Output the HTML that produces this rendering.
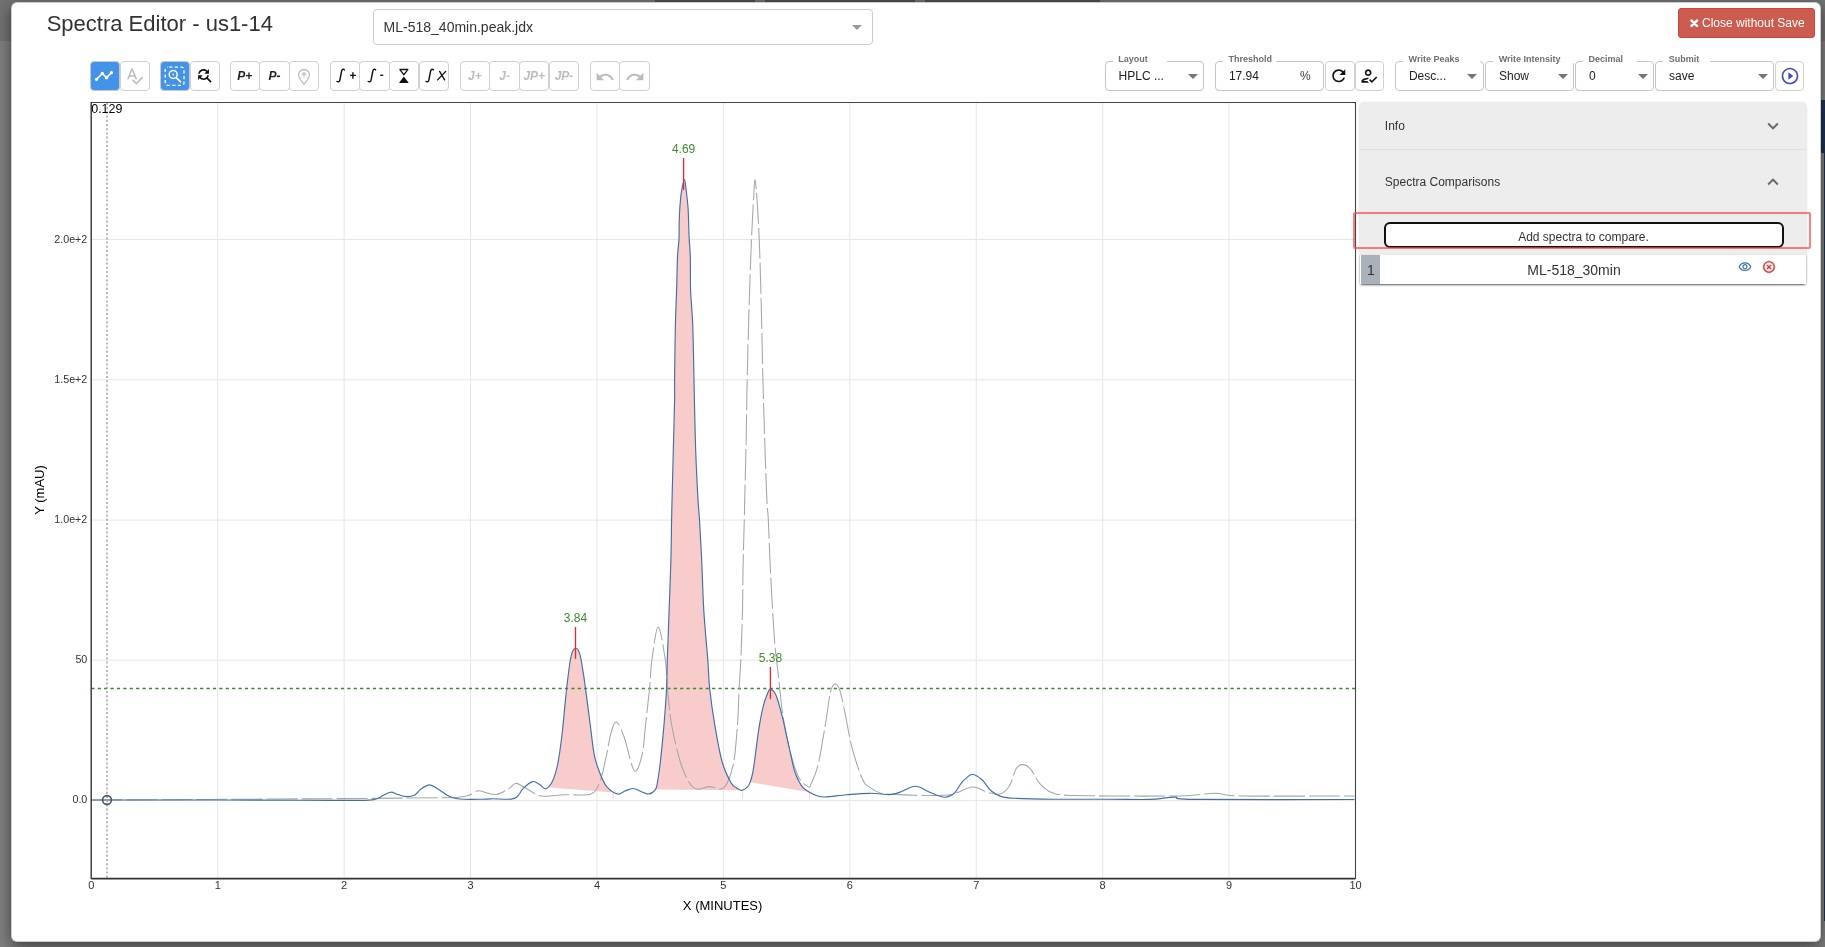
<!DOCTYPE html>
<html><head><meta charset="utf-8"><title>Spectra Editor</title>
<style>
*{box-sizing:border-box;margin:0;padding:0}
html,body{width:1825px;height:947px;overflow:hidden;background:#fff;font-family:"Liberation Sans",sans-serif;color:#333}
.abs{position:absolute}
#backdrop{position:absolute;left:0;top:0;width:1825px;height:947px;background:rgba(0,0,0,.5)}
#modal{position:absolute;left:11px;top:2px;width:1810px;height:939.5px;background:#fff;border:1px solid rgba(0,0,0,.2);border-radius:6px;box-shadow:0 5px 15px rgba(0,0,0,.5);overflow:hidden}
.title{position:absolute;left:46.7px;top:11px;font-size:22px;color:#333;line-height:25px;white-space:nowrap}
.fsel{position:absolute;left:372.6px;top:9px;width:500px;height:36px;border:1px solid #ccc;border-radius:4px;background:#fff}
.fsel span{position:absolute;left:10px;top:9px;font-size:14px;color:#333;line-height:16px;white-space:nowrap}
.caret{position:absolute;width:0;height:0;border-style:solid;border-width:5px 5px 0 5px;border-color:#999 transparent transparent transparent}
.btn-close{position:absolute;left:1678px;top:8px;width:137px;height:30px;background:#cc5b50;border:1px solid #c5473d;border-radius:3px;color:#fff;font-size:12px}
.btn-close span{position:absolute;left:23px;top:7px;line-height:14px;white-space:nowrap}
.tb{position:absolute;top:61px;width:30.4px;height:29.7px;border:1px solid #d0d0d0;border-radius:4px;background:#fff}
.tb.on{background:#4393e8;border-color:#c9c9c9}
.tb .t{position:absolute;left:0;right:0;top:7px;text-align:center;font-size:12px;font-weight:bold;font-style:italic;line-height:14px;color:#222;white-space:nowrap}
.tb.dis .t{color:#bdbdbd}
.tb svg{position:absolute}
.fld{position:absolute;top:61.2px;height:29.4px;border:1px solid #c4c4c4;border-radius:4px;background:#fff}
.fld .gap{position:absolute;top:-2px;height:3px;background:#fff;left:7px}
.fld .lbl{position:absolute;top:-8px;left:12.7px;font-size:9px;font-weight:bold;color:#6f6f6f;line-height:10px;white-space:nowrap}
.fld .val{position:absolute;left:13px;top:6.5px;font-size:12px;color:#222;line-height:14px;white-space:nowrap}
.dd{position:absolute;top:11.8px;width:0;height:0;border-style:solid;border-width:5px 5px 0 5px;border-color:#767676 transparent transparent transparent}
.panel{position:absolute;left:1360px;top:102px;width:445.5px;background:#ededed;box-shadow:0 1px 3px rgba(0,0,0,.2),0 1px 1px rgba(0,0,0,.14),0 2px 1px -1px rgba(0,0,0,.12);border-radius:4px}
.ph{position:absolute;left:24.8px;font-size:12px;color:#333;line-height:14px;white-space:nowrap}
</style></head>
<body>
<div id="root" style="position:absolute;left:0;top:0;width:1825px;height:947px;will-change:transform">
<!-- page behind backdrop -->
<div class="abs" style="left:0;top:0;width:1825px;height:40.5px;background:#e4e4e4"></div>
<div class="abs" style="left:655px;top:0;width:100px;height:4px;background:#9c9c9c"></div>
<div class="abs" style="left:765px;top:0;width:150px;height:4px;background:#9c9c9c"></div>
<div class="abs" style="left:925px;top:0;width:175px;height:4px;background:#9c9c9c"></div>
<div class="abs" style="left:1819px;top:100px;width:6px;height:53px;background:#3d66a4"></div>
<div class="abs" style="left:1823.5px;top:153px;width:1.5px;height:768px;background:#3d66a4"></div>
<div id="backdrop"></div>

<div id="modal">
</div>
<!-- content positioned in page coordinates -->
<div class="title">Spectra Editor - us1-14</div>
<div class="fsel"><span>ML-518_40min.peak.jdx</span><div class="caret" style="left:478px;top:14.6px"></div></div>
<div class="btn-close">
  <svg class="abs" style="left:11px;top:9.6px" width="8.5" height="8.5" viewBox="0 0 10 10"><path d="M1.8,1.8L8.2,8.2M8.2,1.8L1.8,8.2" stroke="#fff" stroke-width="3" stroke-linecap="round"/></svg>
  <span>Close without Save</span>
</div>

<!-- toolbar left -->
<div class="tb on" style="left:90px"><svg style="left:3px;top:3.5px" width="20" height="20" viewBox="0 0 24 24"><path fill="#fff" d="M23 8c0 1.1-.9 2-2 2-.18 0-.35-.02-.51-.07l-3.56 3.55c.05.16.07.34.07.52 0 1.1-.9 2-2 2s-2-.9-2-2c0-.18.02-.36.07-.52l-2.55-2.55c-.16.05-.34.07-.52.07s-.36-.02-.52-.07l-4.55 4.56c.05.16.07.33.07.51 0 1.1-.9 2-2 2s-2-.9-2-2 .9-2 2-2c.18 0 .35.02.51.07l4.56-4.55C8.02 9.36 8 9.18 8 9c0-1.1.9-2 2-2s2 .9 2 2c0 .18-.02.36-.07.52l2.55 2.55c.16-.05.34-.07.52-.07s.36.02.52.07l3.55-3.56C19.02 8.35 19 8.18 19 8c0-1.1.9-2 2-2s2 .9 2 2z"/></svg></div>
<div class="tb dis" style="left:119.7px"><svg style="left:4px;top:4px" width="20" height="20" viewBox="0 0 24 24"><path fill="#bdbdbd" d="M12.45 16h2.09L9.43 3H7.57L2.46 16h2.09l1.12-3h5.64l1.14 3zm-6.02-5L8.5 5.48 10.57 11H6.43zm15.16.59l-8.09 8.09L9.83 16l-1.41 1.41 5.09 5.09L22 14l-1.41-1.41z"/></svg></div>

<div class="tb on" style="left:160px"><svg style="left:2.5px;top:3.5px" width="22" height="22" viewBox="0 0 22 22">
  <rect x="1.2" y="1.2" width="18.8" height="18.2" rx="2.5" fill="none" stroke="#fff" stroke-width="1.25" stroke-dasharray="3.2,2.4" stroke-dashoffset="-1.5"/>
  <circle cx="9.2" cy="8.5" r="4" fill="none" stroke="#fff" stroke-width="1.5"/>
  <path d="M12.2,11.7L16.6,15.9" stroke="#fff" stroke-width="1.6" stroke-linecap="round"/>
  <path d="M9.1,6.4L9.8,8.5L9.1,10.6L8.4,8.5Z" fill="#fff" opacity=".85"/>
</svg></div>
<div class="tb" style="left:189.7px"><svg style="left:4px;top:4px" width="18.6" height="18.6" viewBox="0 0 24 24"><path fill="#111" d="M11 6c1.38 0 2.63.56 3.54 1.46L12 10h6V4l-2.05 2.05C14.68 4.78 12.93 4 11 4c-3.53 0-6.43 2.61-6.92 6H6.1c.46-2.28 2.48-4 4.9-4zm5.64 9.14c.66-.9 1.12-1.97 1.28-3.14H15.9c-.46 2.28-2.48 4-4.9 4-1.38 0-2.63-.56-3.54-1.46L10 12H4v6l2.05-2.05C7.32 17.22 9.07 18 11 18c1.55 0 2.98-.51 4.14-1.36L20 21.49 21.49 20l-4.85-4.86z"/></svg></div>

<div class="tb" style="left:229.6px"><div class="t">P+</div></div>
<div class="tb" style="left:259.3px"><div class="t">P-</div></div>
<div class="tb dis" style="left:289px"><svg style="left:7px;top:6px" width="14" height="18" viewBox="0 0 14 18">
  <path d="M7,16.5C5,13.5 1.6,10 1.6,6.9A5.4,5.4 0 0 1 12.4,6.9C12.4,10 9,13.5 7,16.5Z" fill="none" stroke="#bdbdbd" stroke-width="1.3"/>
  <path d="M7,3.8V8.3M4.8,6H9.2" stroke="#bdbdbd" stroke-width="1.3"/>
</svg></div>

<div class="tb" style="left:329.7px"><svg style="left:0;top:0" width="29" height="29" viewBox="0 0 29 29"><path d="M13.4,7.9C12.8,7.0 11.2,6.9 10.7,8.8C10.2,11 9.4,15.5 8.9,17.8C8.5,19.7 7.3,20.3 6.0,19.5" fill="none" stroke="#111" stroke-width="1.45" stroke-linecap="round"/><path d="M21.9,10.3V16.7M19.1,13.4H24.9" stroke="#111" stroke-width="1.4"/></svg></div>
<div class="tb" style="left:359.4px"><svg style="left:0;top:0" width="29" height="29" viewBox="0 0 29 29"><path d="M15.600000000000001,7.9C15.0,7.0 13.399999999999999,6.9 12.899999999999999,8.8C12.399999999999999,11 11.600000000000001,15.5 11.100000000000001,17.8C10.7,19.7 9.5,20.3 8.2,19.5" fill="none" stroke="#111" stroke-width="1.45" stroke-linecap="round"/><path d="M20.3,13.3H23.2" stroke="#111" stroke-width="1.4"/></svg></div>
<div class="tb" style="left:389.1px"><svg style="left:0;top:0" width="29" height="29" viewBox="0 0 29 29"><path d="M9.4,7.5H18.3" stroke="#111" stroke-width="1.5"/><path d="M10.2,8.1L13.85,12.6L17.5,8.1" fill="none" stroke="#111" stroke-width="1.3"/><path d="M13.85,14.4L18.3,20.3V21H9.4V20.3Z" fill="#111"/></svg></div>
<div class="tb" style="left:418.8px"><svg style="left:0;top:0" width="29" height="29" viewBox="0 0 29 29"><path d="M13.4,7.9C12.8,7.0 11.2,6.9 10.7,8.8C10.2,11 9.4,15.5 8.9,17.8C8.5,19.7 7.3,20.3 6.0,19.5" fill="none" stroke="#111" stroke-width="1.45" stroke-linecap="round"/><path d="M19.6,9.4L24.6,17.9M25.7,9.4L17.6,17.9" stroke="#111" stroke-width="1.35" stroke-linecap="round"/></svg></div>

<div class="tb dis" style="left:459.7px"><div class="t">J+</div></div>
<div class="tb dis" style="left:489.4px"><div class="t">J-</div></div>
<div class="tb dis" style="left:519.1px"><div class="t">JP+</div></div>
<div class="tb dis" style="left:548.8px"><div class="t">JP-</div></div>

<div class="tb dis" style="left:589.5px"><svg style="left:4.5px;top:4.5px" width="20" height="20" viewBox="0 0 24 24"><path fill="#bdbdbd" d="M12.5 8c-2.65 0-5.05.99-6.9 2.6L2 7v9h9l-3.62-3.62c1.39-1.16 3.16-1.88 5.12-1.88 3.54 0 6.55 2.31 7.6 5.5l2.37-.78C21.08 11.03 17.15 8 12.5 8z"/></svg></div>
<div class="tb dis" style="left:619.2px"><svg style="left:4.5px;top:4.5px" width="20" height="20" viewBox="0 0 24 24"><path fill="#bdbdbd" d="M18.4 10.6C16.55 8.99 14.15 8 11.5 8c-4.65 0-8.58 3.03-9.96 7.22L3.9 16c1.05-3.19 4.05-5.5 7.6-5.5 1.95 0 3.73.72 5.12 1.88L13 16h9V7l-3.6 3.6z"/></svg></div>

<!-- toolbar right -->
<div class="fld" style="left:1104.6px;width:99.6px"><div class="gap" style="width:54.5px"></div><div class="lbl">Layout</div><div class="val">HPLC ...</div><div class="dd" style="left:82.1px"></div></div>
<div class="fld" style="left:1214.9px;width:109px"><div class="gap" style="width:53.2px"></div><div class="lbl">Threshold</div><div class="val">17.94</div><div class="val" style="left:84px;color:#444">%</div></div>
<div class="tb" style="left:1324.6px;width:30px;top:61.2px;height:29.4px"><svg style="left:3.8px;top:3.5px" width="19.5" height="19.5" viewBox="0 0 24 24"><path fill="#111" d="M17.65 6.35C16.2 4.9 14.21 4 12 4c-4.42 0-7.99 3.58-7.99 8s3.57 8 7.99 8c3.73 0 6.84-2.55 7.73-6h-2.08c-.82 2.33-3.04 4-5.65 4-3.31 0-6-2.69-6-6s2.69-6 6-6c1.66 0 3.14.69 4.22 1.78L13 11h7V4l-2.35 2.35z"/></svg></div>
<div class="tb" style="left:1354.6px;width:29.6px;top:61.2px;height:29.4px"><svg style="left:3.2px;top:4.2px" width="20" height="20" viewBox="0 0 24 24"><path fill="#111" d="M11 12c2.21 0 4-1.79 4-4s-1.79-4-4-4-4 1.79-4 4 1.79 4 4 4zm0-6c1.1 0 2 .9 2 2s-.9 2-2 2-2-.9-2-2 .9-2 2-2zM5 18c.2-.63 2.57-1.68 4.96-1.94l2.04-2c-.39-.04-.68-.06-1-.06-2.67 0-8 1.34-8 4v2h9l-2-2H5zm15.6-5.5l-5.13 5.17-2.07-2.08L12 17l3.47 3.5L22 13.91z"/></svg></div>

<div class="fld" style="left:1394.9px;width:89.1px"><div class="gap" style="width:77.3px"></div><div class="lbl">Write Peaks</div><div class="val">Desc...</div><div class="dd" style="left:71.6px"></div></div>
<div class="fld" style="left:1485px;width:88.7px"><div class="gap" style="width:83.7px"></div><div class="lbl">Write Intensity</div><div class="val">Show</div><div class="dd" style="left:71.6px"></div></div>
<div class="fld" style="left:1574.9px;width:79.1px"><div class="gap" style="width:54.1px"></div><div class="lbl">Decimal</div><div class="val">0</div><div class="dd" style="left:62.1px"></div></div>
<div class="fld" style="left:1655px;width:119px"><div class="gap" style="width:47.1px"></div><div class="lbl">Submit</div><div class="val">save</div><div class="dd" style="left:101.6px"></div></div>
<div class="tb" style="left:1774.7px;width:29.6px;top:61.2px;height:29.4px"><svg style="left:4px;top:4.2px" width="20" height="20" viewBox="0 0 24 24"><path fill="#3f51b5" d="M10 16.5l6-4.5-6-4.5v9zM12 2C6.48 2 2 6.48 2 12s4.48 10 10 10 10-4.48 10-10S17.52 2 12 2zm0 18c-4.41 0-8-3.59-8-8s3.59-8 8-8 8 3.59 8 8-3.59 8-8 8z"/></svg></div>

<!-- chart -->
<svg id="chart" width="1825" height="947" style="position:absolute;left:0;top:0">
<g stroke="#e6e6e6" stroke-width="1"><line x1="217.72" y1="102.5" x2="217.72" y2="878" /><line x1="344.14" y1="102.5" x2="344.14" y2="878" /><line x1="470.56" y1="102.5" x2="470.56" y2="878" /><line x1="596.98" y1="102.5" x2="596.98" y2="878" /><line x1="723.40" y1="102.5" x2="723.40" y2="878" /><line x1="849.82" y1="102.5" x2="849.82" y2="878" /><line x1="976.24" y1="102.5" x2="976.24" y2="878" /><line x1="1102.66" y1="102.5" x2="1102.66" y2="878" /><line x1="1229.08" y1="102.5" x2="1229.08" y2="878" /><line x1="91.3" y1="800.4" x2="1355.5" y2="800.4" /><line x1="91.3" y1="660.2" x2="1355.5" y2="660.2" /><line x1="91.3" y1="520.1" x2="1355.5" y2="520.1" /><line x1="91.3" y1="379.8" x2="1355.5" y2="379.8" /><line x1="91.3" y1="239.5" x2="1355.5" y2="239.5" /></g>
<g fill="#f9cccc" stroke="none"><path d="M550.00,787.40C550.37,786.47 550.92,785.70 552.20,781.80C553.48,777.90 556.03,772.13 557.70,764.00C559.37,755.87 560.72,745.55 562.20,733.00C563.68,720.45 565.13,701.45 566.60,688.70C568.07,675.95 569.52,663.23 571.00,656.50C572.48,649.77 574.02,648.67 575.50,648.30C576.98,647.93 578.60,650.15 579.90,654.30C581.20,658.45 582.37,667.47 583.30,673.20C584.23,678.93 584.40,680.57 585.50,688.70C586.60,696.83 588.43,710.92 589.90,722.00C591.37,733.08 592.63,746.70 594.30,755.20C595.97,763.70 597.87,767.82 599.90,773.00C601.93,778.18 604.28,783.03 606.50,786.30C608.72,789.57 612.08,791.55 613.20,792.60Z"/><path d="M655.40,789.60C655.40,789.60 655.05,790.87 655.40,789.60C655.75,788.33 656.68,786.52 657.50,782.00C658.32,777.48 659.22,772.07 660.30,762.50C661.38,752.93 662.95,737.05 664.00,724.60C665.05,712.15 666.05,698.57 666.60,687.80C667.15,677.03 666.88,672.87 667.30,660.00C667.72,647.13 668.50,627.27 669.10,610.60C669.70,593.93 670.48,575.12 670.90,560.00C671.32,544.88 671.40,530.23 671.60,519.90C671.80,509.57 671.82,509.53 672.10,498.00C672.38,486.47 672.88,467.03 673.30,450.70C673.72,434.37 674.38,411.92 674.60,400.00C674.82,388.08 674.47,391.80 674.60,379.20C674.73,366.60 675.07,339.17 675.40,324.40C675.73,309.63 676.25,301.85 676.60,290.60C676.95,279.35 677.10,265.55 677.50,256.90C677.90,248.25 678.72,244.57 679.00,238.70C679.28,232.83 679.05,226.98 679.20,221.70C679.35,216.42 679.53,211.92 679.90,207.00C680.27,202.08 680.65,196.77 681.40,192.20C682.15,187.63 683.57,179.60 684.40,179.60C685.23,179.60 685.80,187.63 686.40,192.20C687.00,196.77 687.63,202.08 688.00,207.00C688.37,211.92 688.40,216.42 688.60,221.70C688.80,226.98 688.92,232.83 689.20,238.70C689.48,244.57 690.07,248.25 690.30,256.90C690.53,265.55 690.20,279.35 690.60,290.60C691.00,301.85 692.13,309.63 692.70,324.40C693.27,339.17 693.72,366.60 694.00,379.20C694.28,391.80 694.12,388.08 694.40,400.00C694.68,411.92 695.12,434.37 695.70,450.70C696.28,467.03 697.27,486.47 697.90,498.00C698.53,509.53 698.87,509.57 699.50,519.90C700.13,530.23 700.98,544.88 701.70,560.00C702.42,575.12 702.78,593.93 703.80,610.60C704.82,627.27 706.83,647.13 707.80,660.00C708.77,672.87 708.45,677.03 709.60,687.80C710.75,698.57 712.58,712.15 714.70,724.60C716.82,737.05 719.57,752.80 722.30,762.50C725.03,772.20 728.82,778.63 731.10,782.80C733.38,786.97 734.20,786.25 736.00,787.50C737.80,788.75 740.92,789.83 741.90,790.30C742.88,790.77 741.90,790.30 741.90,790.30Z"/><path d="M750.30,782.30C750.30,782.20 749.88,783.37 750.30,781.70C750.72,780.03 752.07,775.92 752.80,772.30C753.53,768.68 753.72,767.08 754.70,760.00C755.68,752.92 757.28,738.73 758.70,729.80C760.12,720.87 761.70,712.53 763.20,706.40C764.70,700.27 766.50,695.83 767.70,693.00C768.90,690.17 769.05,689.12 770.40,689.40C771.75,689.68 773.87,690.37 775.80,694.70C777.73,699.03 779.77,706.57 782.00,715.40C784.23,724.23 787.17,738.62 789.20,747.70C791.23,756.78 792.72,764.57 794.20,769.90C795.68,775.23 796.63,776.75 798.10,779.70C799.57,782.65 801.18,785.55 803.00,787.60C804.82,789.65 808.00,791.27 809.00,792.00C810.00,792.73 809.00,792.00 809.00,792.00Z"/></g>
<g stroke="#fad4d4" stroke-width="1"><line x1="613.2" y1="792.6" x2="613.2" y2="799.5"/><line x1="742.4" y1="790.3" x2="742.4" y2="799.5"/><line x1="809.5" y1="792" x2="809.5" y2="799.5"/></g>
<line x1="91.3" y1="688.5" x2="1355.5" y2="688.5" stroke="#3b8c2a" stroke-width="1.6" stroke-dasharray="3.2,3.2"/>
<path d="M91.50,800.00C109.58,799.92 153.58,799.77 200.00,799.50C246.42,799.23 329.45,798.70 370.00,798.40C410.55,798.10 428.53,797.88 443.30,797.70C458.07,797.52 454.22,797.75 458.60,797.30C462.98,796.85 466.48,796.03 469.60,795.00C472.72,793.97 475.48,791.75 477.30,791.10C479.12,790.45 477.40,790.55 480.50,791.10C483.60,791.65 491.15,794.85 495.90,794.40C500.65,793.95 505.72,790.23 509.00,788.40C512.28,786.57 513.03,783.58 515.60,783.40C518.17,783.22 520.75,785.37 524.40,787.30C528.05,789.23 533.85,793.52 537.50,795.00C541.15,796.48 542.55,796.20 546.30,796.20C550.05,796.20 556.25,795.25 560.00,795.00C563.75,794.75 563.63,794.87 568.80,794.70C573.97,794.53 585.82,796.15 591.00,794.00C596.18,791.85 597.32,788.27 599.90,781.80C602.48,775.33 604.65,763.33 606.50,755.20C608.35,747.07 609.33,738.53 611.00,733.00C612.67,727.47 614.28,721.25 616.50,722.00C618.72,722.75 621.33,729.38 624.30,737.50C627.27,745.62 631.35,767.75 634.30,770.70C637.25,773.65 640.12,762.88 642.00,755.20C643.88,747.52 644.33,735.83 645.60,724.60C646.87,713.37 648.55,698.57 649.60,687.80C650.65,677.03 650.47,670.12 651.90,660.00C653.33,649.88 655.97,627.10 658.20,627.10C660.43,627.10 663.78,649.88 665.30,660.00C666.82,670.12 666.25,677.03 667.30,687.80C668.35,698.57 669.40,712.15 671.60,724.60C673.80,737.05 677.53,752.80 680.50,762.50C683.47,772.20 686.65,778.37 689.40,782.80C692.15,787.23 693.63,788.47 697.00,789.10C700.37,789.73 705.60,786.60 709.60,786.60C713.60,786.60 718.05,789.73 721.00,789.10C723.95,788.47 725.18,787.23 727.30,782.80C729.42,778.37 732.00,772.20 733.70,762.50C735.40,752.80 736.58,737.05 737.50,724.60C738.42,712.15 738.65,698.57 739.20,687.80C739.75,677.03 740.25,672.87 740.80,660.00C741.35,647.13 742.13,625.60 742.50,610.60C742.87,595.60 742.70,585.23 743.00,570.00C743.30,554.77 744.02,530.77 744.30,519.20C744.58,507.63 744.40,513.30 744.70,500.60C745.00,487.90 745.68,463.40 746.10,443.00C746.52,422.60 746.68,401.55 747.20,378.20C747.72,354.85 748.48,326.15 749.20,302.90C749.92,279.65 750.75,256.42 751.50,238.70C752.25,220.98 753.12,206.50 753.70,196.60C754.28,186.70 754.48,179.30 755.00,179.30C755.52,179.30 756.10,186.70 756.80,196.60C757.50,206.50 758.47,220.98 759.20,238.70C759.93,256.42 760.60,280.18 761.20,302.90C761.80,325.62 762.20,351.65 762.80,375.00C763.40,398.35 764.12,422.07 764.80,443.00C765.48,463.93 766.32,487.90 766.90,500.60C767.48,513.30 767.72,507.63 768.30,519.20C768.88,530.77 769.37,549.87 770.40,570.00C771.43,590.13 773.17,622.35 774.50,640.00C775.83,657.65 777.00,663.33 778.40,675.90C779.80,688.47 781.10,703.43 782.90,715.40C784.70,727.37 786.65,737.53 789.20,747.70C791.75,757.87 795.07,769.92 798.20,776.40C801.33,782.88 805.88,785.30 808.00,786.60C810.12,787.90 809.25,787.70 810.90,784.20C812.55,780.70 815.53,775.27 817.90,765.60C820.27,755.93 823.00,738.47 825.10,726.20C827.20,713.93 828.85,699.03 830.50,692.00C832.15,684.97 833.50,684.43 835.00,684.00C836.50,683.57 837.87,684.77 839.50,689.40C841.13,694.03 842.72,702.08 844.80,711.80C846.88,721.52 849.00,736.33 852.00,747.70C855.00,759.07 859.80,773.38 862.80,780.00C865.80,786.62 867.05,785.18 870.00,787.40C872.95,789.62 877.00,792.17 880.50,793.30C884.00,794.43 885.52,793.87 891.00,794.20C896.48,794.53 904.63,795.12 913.40,795.30C922.17,795.48 936.58,795.63 943.60,795.30C950.62,794.97 950.67,794.68 955.50,793.30C960.33,791.92 967.12,787.12 972.60,787.00C978.08,786.88 983.80,791.43 988.40,792.60C993.00,793.77 996.70,795.10 1000.20,794.00C1003.70,792.90 1006.77,790.18 1009.40,786.00C1012.03,781.82 1013.82,772.47 1016.00,768.90C1018.18,765.33 1020.10,764.60 1022.50,764.60C1024.90,764.60 1027.55,765.77 1030.40,768.90C1033.25,772.03 1036.08,779.45 1039.60,783.40C1043.12,787.35 1046.88,790.62 1051.50,792.60C1056.12,794.58 1057.55,794.75 1067.30,795.30C1077.05,795.85 1091.22,795.80 1110.00,795.90C1128.78,796.00 1162.43,796.35 1180.00,795.90C1197.57,795.45 1205.40,793.20 1215.40,793.20C1225.40,793.20 1216.82,795.43 1240.00,795.90C1263.18,796.37 1335.42,795.98 1354.50,796.00" fill="none" stroke="#a2a7ac" stroke-width="1.05" stroke-dasharray="31,4"/>
<path d="M91.50,800.00C109.58,800.00 165.25,799.97 200.00,800.00C234.75,800.03 273.33,800.13 300.00,800.20C326.67,800.27 347.45,800.55 360.00,800.40C372.55,800.25 371.47,800.12 375.30,799.30C379.13,798.48 380.43,796.68 383.00,795.50C385.57,794.32 388.20,792.37 390.70,792.20C393.20,792.03 395.45,793.77 398.00,794.50C400.55,795.23 403.20,796.53 406.00,796.60C408.80,796.67 412.30,796.17 414.80,794.90C417.30,793.63 418.53,790.68 421.00,789.00C423.47,787.32 426.77,784.80 429.60,784.80C432.43,784.80 434.98,787.22 438.00,789.00C441.02,790.78 444.70,793.92 447.70,795.50C450.70,797.08 453.27,797.87 456.00,798.50C458.73,799.13 460.02,799.17 464.10,799.30C468.18,799.43 475.93,799.38 480.50,799.30C485.07,799.22 486.38,798.83 491.50,798.80C496.62,798.77 506.82,799.57 511.20,799.10C515.58,798.63 515.78,797.78 517.80,796.00C519.82,794.22 520.83,790.80 523.30,788.40C525.77,786.00 529.87,782.25 532.60,781.60C535.33,780.95 537.55,783.32 539.70,784.50C541.85,785.68 543.42,789.15 545.50,788.70C547.58,788.25 550.17,785.92 552.20,781.80C554.23,777.68 556.03,772.13 557.70,764.00C559.37,755.87 560.72,745.55 562.20,733.00C563.68,720.45 565.13,701.45 566.60,688.70C568.07,675.95 569.52,663.23 571.00,656.50C572.48,649.77 574.02,648.67 575.50,648.30C576.98,647.93 578.60,650.15 579.90,654.30C581.20,658.45 582.37,667.47 583.30,673.20C584.23,678.93 584.40,680.57 585.50,688.70C586.60,696.83 588.43,710.92 589.90,722.00C591.37,733.08 592.63,746.70 594.30,755.20C595.97,763.70 597.87,767.82 599.90,773.00C601.93,778.18 603.55,782.80 606.50,786.30C609.45,789.80 614.52,793.22 617.60,794.00C620.68,794.78 622.40,791.92 625.00,791.00C627.60,790.08 630.53,788.42 633.20,788.50C635.87,788.58 638.45,790.58 641.00,791.50C643.55,792.42 646.10,794.32 648.50,794.00C650.90,793.68 653.90,791.60 655.40,789.60C656.90,787.60 656.68,786.52 657.50,782.00C658.32,777.48 659.22,772.07 660.30,762.50C661.38,752.93 662.95,737.05 664.00,724.60C665.05,712.15 666.05,698.57 666.60,687.80C667.15,677.03 666.88,672.87 667.30,660.00C667.72,647.13 668.50,627.27 669.10,610.60C669.70,593.93 670.48,575.12 670.90,560.00C671.32,544.88 671.40,530.23 671.60,519.90C671.80,509.57 671.82,509.53 672.10,498.00C672.38,486.47 672.88,467.03 673.30,450.70C673.72,434.37 674.38,411.92 674.60,400.00C674.82,388.08 674.47,391.80 674.60,379.20C674.73,366.60 675.07,339.17 675.40,324.40C675.73,309.63 676.25,301.85 676.60,290.60C676.95,279.35 677.10,265.55 677.50,256.90C677.90,248.25 678.72,244.57 679.00,238.70C679.28,232.83 679.05,226.98 679.20,221.70C679.35,216.42 679.53,211.92 679.90,207.00C680.27,202.08 680.65,196.77 681.40,192.20C682.15,187.63 683.57,179.60 684.40,179.60C685.23,179.60 685.80,187.63 686.40,192.20C687.00,196.77 687.63,202.08 688.00,207.00C688.37,211.92 688.40,216.42 688.60,221.70C688.80,226.98 688.92,232.83 689.20,238.70C689.48,244.57 690.07,248.25 690.30,256.90C690.53,265.55 690.20,279.35 690.60,290.60C691.00,301.85 692.13,309.63 692.70,324.40C693.27,339.17 693.72,366.60 694.00,379.20C694.28,391.80 694.12,388.08 694.40,400.00C694.68,411.92 695.12,434.37 695.70,450.70C696.28,467.03 697.27,486.47 697.90,498.00C698.53,509.53 698.87,509.57 699.50,519.90C700.13,530.23 700.98,544.88 701.70,560.00C702.42,575.12 702.78,593.93 703.80,610.60C704.82,627.27 706.83,647.13 707.80,660.00C708.77,672.87 708.45,677.03 709.60,687.80C710.75,698.57 712.58,712.15 714.70,724.60C716.82,737.05 719.57,752.80 722.30,762.50C725.03,772.20 728.82,778.63 731.10,782.80C733.38,786.97 734.20,786.25 736.00,787.50C737.80,788.75 739.93,790.45 741.90,790.30C743.87,790.15 746.40,788.03 747.80,786.60C749.20,785.17 749.47,784.08 750.30,781.70C751.13,779.32 752.07,775.92 752.80,772.30C753.53,768.68 753.72,767.08 754.70,760.00C755.68,752.92 757.28,738.73 758.70,729.80C760.12,720.87 761.70,712.53 763.20,706.40C764.70,700.27 766.50,695.83 767.70,693.00C768.90,690.17 769.05,689.12 770.40,689.40C771.75,689.68 773.87,690.37 775.80,694.70C777.73,699.03 779.77,706.57 782.00,715.40C784.23,724.23 787.17,738.62 789.20,747.70C791.23,756.78 792.72,764.57 794.20,769.90C795.68,775.23 796.63,776.75 798.10,779.70C799.57,782.65 801.18,785.55 803.00,787.60C804.82,789.65 806.77,790.68 809.00,792.00C811.23,793.32 813.73,794.67 816.40,795.50C819.07,796.33 819.97,797.13 825.00,797.00C830.03,796.87 839.10,795.32 846.60,794.70C854.10,794.08 862.82,793.32 870.00,793.30C877.18,793.28 884.88,794.72 889.70,794.60C894.52,794.48 894.62,793.98 898.90,792.60C903.18,791.22 910.35,786.40 915.40,786.30C920.45,786.20 924.38,790.18 929.20,792.00C934.02,793.82 940.13,796.98 944.30,797.20C948.47,797.42 951.23,795.82 954.20,793.30C957.17,790.78 959.15,785.23 962.10,782.10C965.05,778.97 968.62,774.93 971.90,774.50C975.18,774.07 978.62,776.80 981.80,779.50C984.98,782.20 987.72,787.85 991.00,790.70C994.28,793.55 997.55,795.33 1001.50,796.60C1005.45,797.87 1005.93,797.87 1014.70,798.30C1023.47,798.73 1038.22,799.05 1054.10,799.20C1069.98,799.35 1094.02,799.17 1110.00,799.20C1125.98,799.23 1139.20,799.75 1150.00,799.40C1160.80,799.05 1167.30,797.10 1174.80,797.10C1182.30,797.10 1165.05,799.00 1195.00,799.40C1224.95,799.80 1327.92,799.48 1354.50,799.50" fill="none" stroke="#416fab" stroke-width="1.15"/>
<line x1="575.5" y1="627" x2="575.5" y2="658.8" stroke="#e8262b" stroke-width="1.3"/><text x="575.5" y="621.9" text-anchor="middle" fill="#3d8c2e" font-size="12">3.84</text><line x1="683.6" y1="158" x2="683.6" y2="190" stroke="#e8262b" stroke-width="1.3"/><text x="683.6" y="152.8" text-anchor="middle" fill="#3d8c2e" font-size="12">4.69</text><line x1="770.4" y1="666.9" x2="770.4" y2="699.2" stroke="#e8262b" stroke-width="1.3"/><text x="770.4" y="662.2" text-anchor="middle" fill="#3d8c2e" font-size="12">5.38</text>
<line x1="107" y1="103" x2="107" y2="878" stroke="#9a9a9a" stroke-width="1.4" stroke-dasharray="2,2.2"/>
<circle cx="107" cy="800" r="4.4" fill="none" stroke="#555" stroke-width="1.6"/>
<g stroke="#333" fill="none"><path d="M91.3,102.5H1355.5V878.7" stroke-width="1.1" stroke="#444"/><path d="M91.2,102V878.7" stroke-width="1.4"/><path d="M91.2,878.7H1355.5" stroke-width="1.8"/></g>
<g font-family="Liberation Sans" font-size="11" fill="#333"><text x="87.3" y="803.4" text-anchor="end" font-size="10.7">0.0</text><text x="87.3" y="663.2" text-anchor="end" font-size="10.7">50</text><text x="87.3" y="523.1" text-anchor="end" font-size="10.7">1.0e+2</text><text x="87.3" y="382.8" text-anchor="end" font-size="10.7">1.5e+2</text><text x="87.3" y="242.5" text-anchor="end" font-size="10.7">2.0e+2</text><text x="91.30" y="889" text-anchor="middle">0</text><text x="217.72" y="889" text-anchor="middle">1</text><text x="344.14" y="889" text-anchor="middle">2</text><text x="470.56" y="889" text-anchor="middle">3</text><text x="596.98" y="889" text-anchor="middle">4</text><text x="723.40" y="889" text-anchor="middle">5</text><text x="849.82" y="889" text-anchor="middle">6</text><text x="976.24" y="889" text-anchor="middle">7</text><text x="1102.66" y="889" text-anchor="middle">8</text><text x="1229.08" y="889" text-anchor="middle">9</text><text x="1355.50" y="889" text-anchor="middle">10</text></g>
<text x="91.2" y="113" font-family="Liberation Sans" font-size="12.5" fill="#000">0.129</text>
<text x="722.6" y="909.8" text-anchor="middle" font-family="Liberation Sans" font-size="13" fill="#000">X (MINUTES)</text>
<text transform="translate(44,490) rotate(-90)" text-anchor="middle" font-family="Liberation Sans" font-size="13" fill="#000">Y (mAU)</text>
</svg>

<!-- right panel -->
<div class="panel" style="height:182px">
  <div class="ph" style="top:17px">Info</div>
  <svg class="abs" style="left:402px;top:13px" width="22" height="22" viewBox="0 0 24 24"><path fill="#666" d="M16.59 8.59L12 13.17 7.41 8.59 6 10l6 6 6-6z"/></svg>
  <div class="abs" style="left:0;top:47px;width:446px;height:1px;background:#e0e0e0"></div>
  <div class="ph" style="top:73px">Spectra Comparisons</div>
  <svg class="abs" style="left:402px;top:69px" width="22" height="22" viewBox="0 0 24 24"><path fill="#666" d="M12 8l-6 6 1.41 1.41L12 10.83l4.59 4.58L18 14z"/></svg>
  <div class="abs" style="left:0;top:152.5px;width:446px;height:29.5px;background:#fff;box-shadow:0 1px 2px rgba(0,0,0,.35)"></div>
  <div class="abs" style="left:0.5px;top:152.5px;width:19.5px;height:29.5px;background:#aab1ba"></div>
  <div class="abs" style="left:0.8px;top:153px;width:20px;height:30px;text-align:center;font-size:14px;line-height:30px;color:#333">1</div>
  <div class="abs" style="left:20px;top:153px;width:388px;height:30px;text-align:center;font-size:14px;line-height:30px;color:#333">ML-518_30min</div>
  <svg class="abs" style="left:378.2px;top:157.5px" width="14" height="14" viewBox="0 0 24 24"><path fill="#3a6ea8" d="M12 6c3.79 0 7.17 2.13 8.82 5.5C19.17 14.87 15.79 17 12 17s-7.17-2.13-8.82-5.5C4.83 8.13 8.21 6 12 6m0-2C7 4 2.73 7.11 1 11.5 2.73 15.89 7 19 12 19s9.27-3.11 11-7.5C21.27 7.11 17 4 12 4zm0 5c1.38 0 2.5 1.12 2.5 2.5S13.38 14 12 14s-2.5-1.12-2.5-2.5S10.62 9 12 9m0-2c-2.48 0-4.5 2.02-4.5 4.5S9.52 16 12 16s4.5-2.02 4.5-4.5S14.48 7 12 7z"/></svg>
  <svg class="abs" style="left:402.1px;top:158px" width="14" height="14" viewBox="0 0 24 24"><path stroke="#e8302c" stroke-width=".6" fill="#e8302c" d="M14.59 8L12 10.59 9.41 8 8 9.41 10.59 12 8 14.59 9.41 16 12 13.41 14.59 16 16 14.59 13.41 12 16 9.41 14.59 8zM12 2C6.47 2 2 6.47 2 12s4.47 10 10 10 10-4.47 10-10S17.53 2 12 2zm0 18c-4.41 0-8-3.59-8-8s3.59-8 8-8 8 3.59 8 8-3.59 8-8 8z"/></svg>
</div>
<div class="abs" style="left:1383.5px;top:222px;width:400px;height:25.5px;border:2px solid #111;border-radius:6px;background:#fff;text-align:center;font-size:12px;line-height:22px;padding-top:2px;color:#333">Add spectra to compare.</div>
<div class="abs" style="left:1353px;top:212px;width:458px;height:37px;border:2px solid rgba(255,70,70,.7);border-radius:2px"></div>
</div>
</body></html>
